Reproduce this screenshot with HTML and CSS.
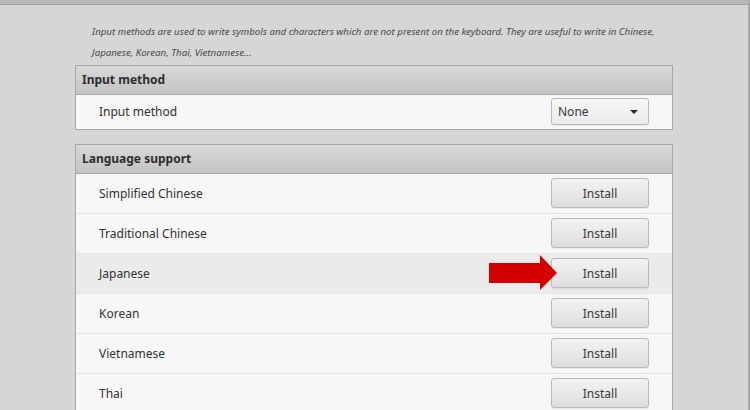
FILE: index.html
```html
<!DOCTYPE html>
<html>
<head>
<meta charset="utf-8">
<link rel="stylesheet" href="styles.css">
</head>
<body>
<div class="window">
  <div class="topbar"></div>
  <div class="content">
    <p class="desc">Input methods are used to write symbols and characters which are not present on the keyboard. They are useful to write in Chinese,<br>Japanese, Korean, Thai, Vietnamese...</p>
    <section class="frame">
      <div class="frame-head">Input method</div>
      <div class="row row-first">
        <span class="label">Input method</span>
        <div class="combo"><span>None</span><span class="caret"></span></div>
      </div>
    </section>
    <section class="frame frame-lang">
      <div class="frame-head">Language support</div>
      <div class="row"><span class="label">Simplified Chinese</span><button class="btn">Install</button></div>
      <div class="row"><span class="label">Traditional Chinese</span><button class="btn">Install</button></div>
      <div class="row row-hl"><span class="label">Japanese</span>
        <svg class="arrow" width="70" height="36" viewBox="0 0 70 36"><polygon points="0,8 51,8 51,0 68,18 51,35 51,28 0,28" fill="#d40000"/></svg>
        <button class="btn">Install</button></div>
      <div class="row"><span class="label">Korean</span><button class="btn">Install</button></div>
      <div class="row"><span class="label">Vietnamese</span><button class="btn">Install</button></div>
      <div class="row"><span class="label">Thai</span><button class="btn">Install</button></div>
    </section>
  </div>
</div>
</body>
</html>
```
FILE: styles.css
```css
html, body {
  margin: 0;
  padding: 0;
  overflow: hidden;
}
body {
  font-family: "Noto Sans", "DejaVu Sans", sans-serif;
  color: #3a3a3a;
}
.window {
  width: 748px;
  height: 410px;
  background: #d6d6d6;
  border-right: 2px solid #a9a9a9;
  overflow: hidden;
}
.topbar {
  height: 4px;
  background: #b8b8b8;
  border-bottom: 1px solid #a2a2a2;
}
.content {
  margin-left: 75px;
  width: 598px;
}
.desc {
  margin: 16px 0 2px 17px;
  font-size: 9.7px;
  font-style: italic;
  line-height: 21px;
  color: #4a4a4a;
  white-space: nowrap;
}
.frame {
  border: 1px solid #a7a7a7;
  background: #f7f7f7;
}
.frame-lang {
  margin-top: 14px;
}
.frame-head {
  height: 28px;
  line-height: 28px;
  padding-left: 6px;
  font-size: 12px;
  font-weight: bold;
  color: #2e2e2e;
  background: linear-gradient(#d9d9d9, #c3c3c3);
  border-bottom: 1px solid #a9a9a9;
}
.row {
  position: relative;
  display: flex;
  align-items: center;
  justify-content: space-between;
  height: 38px;
  padding: 0 23px 1px 23px;
  border-bottom: 1px solid #e4e4e4;
  font-size: 12px;
}
.row-first {
  height: 33px;
  border-bottom: none;
}
.row-hl {
  background: #ebebeb;
}
.label {
  color: #333;
}
.btn, .combo {
  box-sizing: border-box;
  width: 98px;
  height: 30px;
  border: 1px solid #b9b9b9;
  border-radius: 3px;
  background: linear-gradient(#f3f3f3, #dedede);
  box-shadow: 0 1px 0 rgba(0,0,0,0.06);
  font-family: inherit;
  font-size: 12px;
  color: #3a3a3a;
  padding: 0;
}
.combo {
  height: 27px;
  display: flex;
  align-items: center;
  justify-content: space-between;
  padding: 0 10px 0 6px;
  background: linear-gradient(#f6f6f6, #ebebeb);
}
.caret {
  width: 0;
  height: 0;
  border-left: 4px solid transparent;
  border-right: 4px solid transparent;
  border-top: 4px solid #2a2a2a;
}
.arrow {
  position: absolute;
  left: 413px;
  top: 1px;
}
```
